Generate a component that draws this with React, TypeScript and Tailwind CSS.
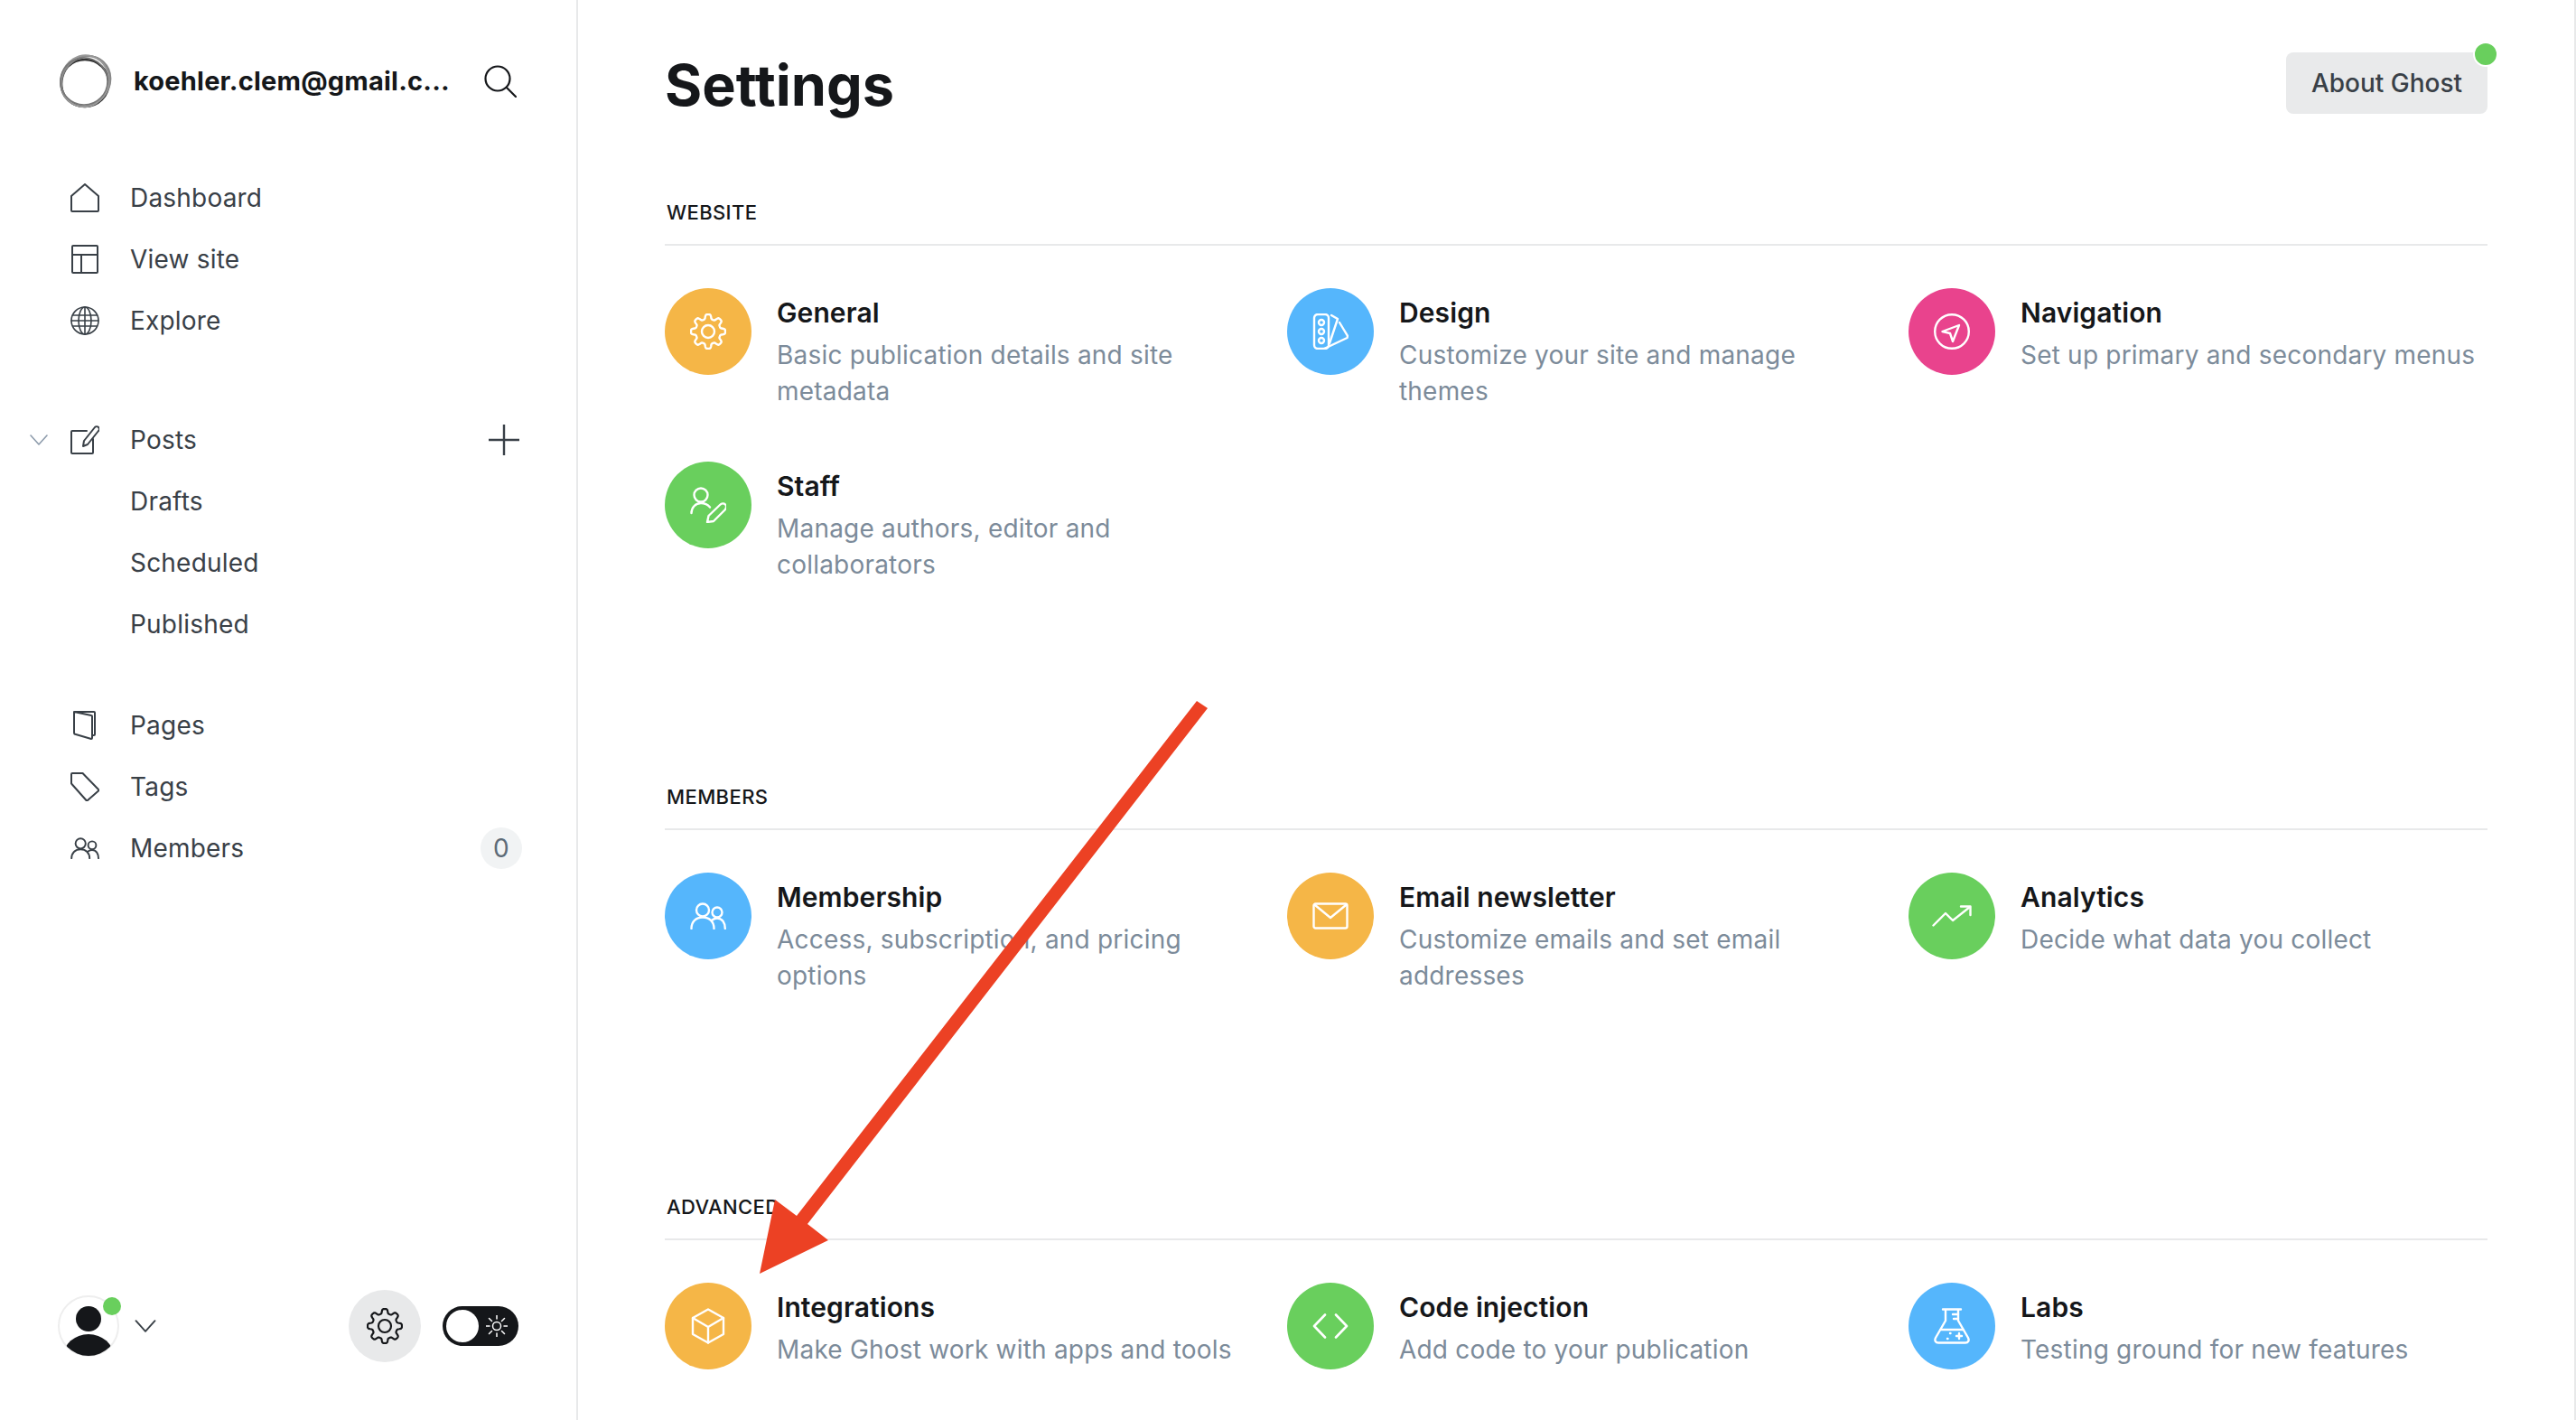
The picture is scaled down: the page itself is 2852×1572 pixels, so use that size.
import React from "react";

const cog = (cx: number, cy: number, r: number, amp: number) => {
  const pts: string[] = [];
  for (let i = 0; i < 160; i++) {
    const a = (i / 160) * Math.PI * 2;
    const wave = Math.tanh(2.2 * Math.cos(8 * a)) / Math.tanh(2.2);
    const rr = r + amp * wave;
    pts.push(`${(cx + rr * Math.cos(a)).toFixed(2)} ${(cy + rr * Math.sin(a)).toFixed(2)}`);
  }
  return "M" + pts.join("L") + "Z";
};

type IconProps = { className?: string };

const line = {
  fill: "none",
  stroke: "currentColor",
  strokeLinecap: "round",
  strokeLinejoin: "round",
} as const;

const HomeIcon = () => (
  <svg viewBox="0 0 32 32" className="w-8 h-8" {...line} strokeWidth={2}>
    <path d="M1 30v-16L16 1l15 13v16a1 1 0 0 1-1 1H2a1 1 0 0 1-1-1z" />
  </svg>
);
const SiteIcon = () => (
  <svg viewBox="0 0 32 32" className="w-8 h-8" {...line} strokeWidth={2}>
    <rect x="2" y="1" width="28" height="30" rx="1" />
    <path d="M2 11h28M12 11v20" />
  </svg>
);
const GlobeIcon = () => (
  <svg viewBox="0 0 32 32" className="w-8 h-8" {...line} strokeWidth={1.6}>
    <circle cx="16" cy="16" r="15" />
    <ellipse cx="16" cy="16" rx="7" ry="15" />
    <path d="M16 1v30M3 10h26M1 16h30M3 22h26" />
  </svg>
);
const PostIcon = () => (
  <svg viewBox="0 0 32 32" className="w-8 h-8" {...line} strokeWidth={2}>
    <path d="M18 6H2a1 1 0 0 0-1 1v23a1 1 0 0 0 1 1h22a1 1 0 0 0 1-1V15" />
    <path d="M14 23l1-6L27 2c1-1 3-1 4 0s1 3 0 4L19 21z" />
  </svg>
);
const PagesIcon = () => (
  <svg viewBox="0 0 32 32" className="w-8 h-8" {...line} strokeWidth={2}>
    <path d="M5 1h21a1 1 0 0 1 1 1v24a1 1 0 0 1-1 1h-2" />
    <path d="M4 1l19 4a1 1 0 0 1 1 1v24a1 1 0 0 1-1 1l-17-5a2 2 0 0 1-2-2z" />
  </svg>
);
const TagIcon = () => (
  <svg viewBox="0 0 32 32" className="w-8 h-8" {...line} strokeWidth={2}>
    <path d="M2 1h11a1 1 0 0 1 1 .5L31 19a1 1 0 0 1 0 1.500L19 31a1 1 0 0 1-1.500 0L1.500 13a1 1 0 0 1-.5-1V2a1 1 0 0 1 1-1z" />
  </svg>
);
const PeopleIcon = ({ className }: IconProps) => (
  <svg viewBox="0 0 40 30" className={className} {...line} strokeWidth={2.4}>
    <circle cx="14" cy="8.500" r="7" />
    <path d="M1.500 29c0-7.500 5-12.500 12.500-12.500S26.500 21.500 26.500 29" />
    <circle cx="30" cy="11" r="5.500" />
    <path d="M24.500 19.500c1.500-1.200 3.500-2 5.500-2 5.500 0 8.800 5 8.800 11.500" />
  </svg>
);
const Chevron = ({ className }: IconProps) => (
  <svg viewBox="0 0 20 12" className={className} {...line} strokeWidth={1.6}>
    <path d="M1 1l9 10 9-10" />
  </svg>
);

// white drawings inside the colored settings circles
const GeneralGlyph = () => (
  <svg viewBox="0 0 40 40" className="w-10 h-10" {...line} strokeWidth={2.400}>
    <path d={cog(20, 20, 16.500, 2.500)} />
    <circle cx="20" cy="20" r="7" />
  </svg>
);
const DesignGlyph = () => (
  <svg viewBox="0 0 40 40" className="w-10 h-10" {...line} strokeWidth={2.400}>
    <rect x="2" y="1" width="16" height="38" rx="4" />
    <circle cx="10" cy="10" r="3" />
    <circle cx="10" cy="20" r="3" />
    <circle cx="10" cy="30" r="3" />
    <path d="M21 2l7 4-9 27" />
    <path d="M30 10l9 15-.5 2L13 39" />
  </svg>
);
const NavigationGlyph = () => (
  <svg viewBox="0 0 40 40" className="w-10 h-10" {...line} strokeWidth={2.400}>
    <circle cx="20" cy="20" r="18.800" />
    <path d="M9.500 20L28 13l-7 18-3-9z" />
  </svg>
);
const StaffGlyph = () => (
  <svg viewBox="0 0 40 40" className="w-10 h-10" {...line} strokeWidth={2.400}>
    <circle cx="12" cy="9" r="7.500" />
    <path d="M1.500 29c0-6 4.500-11 10.500-11 4 0 7.500 1.500 10 4.500" />
    <path d="M19 39l1.500-7L33 20c2-2 4.500-2 6-.5s1.200 4-.5 6L26 38z" />
  </svg>
);
const EmailGlyph = () => (
  <svg viewBox="0 0 40 30" className="w-10 h-[30px]" {...line} strokeWidth={2.400}>
    <rect x="1.500" y="1.500" width="37" height="27" rx="2" />
    <path d="M3 3l17 14L37 3" />
  </svg>
);
const AnalyticsGlyph = () => (
  <svg viewBox="0 0 44 24" className="w-11 h-6" {...line} strokeWidth={2.400}>
    <path d="M1.500 22.500L15 9l8 8L42 2" />
    <path d="M32 1.500h10.500V11" />
  </svg>
);
const CubeGlyph = () => (
  <svg viewBox="0 0 40 40" className="w-10 h-10" {...line} strokeWidth={2.400}>
    <path d="M20 1.500l17 9.500v18l-17 9.500L3 29V11z" />
    <path d="M3 11l17 10 17-10M20 21v17.500" />
  </svg>
);
const CodeGlyph = () => (
  <svg viewBox="0 0 40 28" className="w-10 h-7" {...line} strokeWidth={2.600}>
    <path d="M14 1.500L2 14l12 12.500M26 1.500L38 14 26 26.500" />
  </svg>
);
const LabsGlyph = () => (
  <svg viewBox="0 0 40 40" className="w-10 h-10" {...line} strokeWidth={2.400}>
    <path d="M10 1.500h20M13 1.500V14L2 33c-1.500 3 0 5.500 3 5.500h30c3 0 4.500-2.500 3-5.500L27 14V1.500" />
    <path d="M21 7h6M22 12h5M7.500 24h25" />
    <path d="M28 28v6M25 31h6M15 34h.5M18 28h.5" />
  </svg>
);

const items = {
  website: [
    { title: "General", desc: "Basic publication details and site metadata", bg: "bg-[#f5b647]", icon: <GeneralGlyph /> },
    { title: "Design", desc: "Customize your site and manage themes", bg: "bg-[#55b6fc]", icon: <DesignGlyph /> },
    { title: "Navigation", desc: "Set up primary and secondary menus", bg: "bg-[#e9438d]", icon: <NavigationGlyph /> },
    { title: "Staff", desc: "Manage authors, editor and collaborators", bg: "bg-[#69cf5d]", icon: <StaffGlyph /> },
  ],
  members: [
    { title: "Membership", desc: "Access, subscription, and pricing options", bg: "bg-[#55b6fc]", icon: <PeopleIcon className="w-10 h-[30px]" /> },
    { title: "Email newsletter", desc: "Customize emails and set email addresses", bg: "bg-[#f5b647]", icon: <EmailGlyph /> },
    { title: "Analytics", desc: "Decide what data you collect", bg: "bg-[#69cf5d]", icon: <AnalyticsGlyph /> },
  ],
  advanced: [
    { title: "Integrations", desc: "Make Ghost work with apps and tools", bg: "bg-[#f5b647]", icon: <CubeGlyph /> },
    { title: "Code injection", desc: "Add code to your publication", bg: "bg-[#69cf5d]", icon: <CodeGlyph /> },
    { title: "Labs", desc: "Testing ground for new features", bg: "bg-[#55b6fc]", icon: <LabsGlyph /> },
  ],
};

const SettingItem = ({ item }: { item: (typeof items.website)[number] }) => (
  <div className="flex gap-7 h-24">
    <div className={`w-24 h-24 shrink-0 rounded-full flex items-center justify-center text-white ${item.bg}`}>
      {item.icon}
    </div>
    <div className="pt-[7px]">
      <div className="text-[30px] leading-10 font-semibold text-[#15171a] tracking-[0.1px]">{item.title}</div>
      <div className="text-[28px] leading-10 text-[#7c8b9a] mt-[7px] tracking-[0.2px]">{item.desc}</div>
    </div>
  </div>
);

const Section = ({ label, list, className }: { label: string; list: (typeof items.website); className: string }) => (
  <section className={className}>
    <div className="h-[60px] text-[22px] leading-[50px] font-medium text-[#15171a] pl-[2px] tracking-[0.4px]">{label}</div>
    <div className="border-t-2 border-[#e8e9ea] pt-[47px] grid grid-cols-[642px_641px_1fr] gap-x-[47px] gap-y-24">
      {list.map((item) => (
        <SettingItem key={item.title} item={item} />
      ))}
    </div>
  </section>
);

const NavRow = ({ icon, label, right }: { icon?: React.ReactNode; label: string; right?: React.ReactNode }) => (
  <div className="h-[68px] flex items-center text-[#394047] text-[28px] tracking-[0.2px] pl-[78px] pr-[60px]">
    <span className="w-[66px] shrink-0">{icon}</span>
    <span className="flex-1">{label}</span>
    {right}
  </div>
);

const App = () => {
  return (
    <div className="relative h-[1572px] w-full overflow-hidden flex bg-white font-['Inter',sans-serif] border-r-2 border-[#e8e9ea]">
      <aside className="w-[640px] shrink-0 border-r-2 border-[#e8e9ea] flex flex-col">
        <div className="flex items-center h-[60px] mt-[60px] pl-[65px] pr-[66px]">
          <svg viewBox="0 0 60 60" className="w-[60px] h-[60px] shrink-0" fill="none" stroke="#333" strokeWidth="1.500">
            <ellipse cx="29" cy="32" rx="26.500" ry="26" strokeWidth="2.500" />
            <ellipse cx="30" cy="30" rx="29" ry="25.500" transform="rotate(-62 30 30)" stroke="#555" />
            <ellipse cx="30" cy="30" rx="29" ry="26" transform="rotate(-48 30 30)" stroke="#888" strokeWidth="2" />
            <ellipse cx="30" cy="29" rx="28.500" ry="26.500" transform="rotate(-75 30 30)" stroke="#999" strokeWidth="2" />
            <ellipse cx="28" cy="30" rx="26" ry="26" stroke="#777" />
          </svg>
          <span className="ml-[23px] flex-1 text-[29px] tracking-[0.2px] font-bold text-[#15171a] whitespace-nowrap">koehler.clem@gmail.c...</span>
          <svg viewBox="0 0 36 36" className="w-9 h-9 shrink-0 text-[#15171a]" {...line} strokeWidth={2.200}>
            <circle cx="15" cy="15" r="13.500" />
            <path d="M25 25l10 10" />
          </svg>
        </div>

        <nav className="mt-[65px]">
          <NavRow icon={<HomeIcon />} label="Dashboard" />
          <NavRow icon={<SiteIcon />} label="View site" />
          <NavRow icon={<GlobeIcon />} label="Explore" />
        </nav>

        <nav className="mt-[64px] relative">
          <Chevron className="absolute left-[33px] top-[28px] w-5 h-3 text-[#8e9cac]" />
          <NavRow
            icon={<PostIcon />}
            label="Posts"
            right={
              <svg viewBox="0 0 34 34" className="w-[34px] h-[34px] text-[#394047] mr-[3px]" {...line} strokeWidth={2.400}>
                <path d="M17 0v34M0 17h34" />
              </svg>
            }
          />
          <NavRow label="Drafts" />
          <NavRow label="Scheduled" />
          <NavRow label="Published" />
        </nav>

        <nav className="mt-[44px]">
          <NavRow icon={<PagesIcon />} label="Pages" />
          <NavRow icon={<TagIcon />} label="Tags" />
          <NavRow
            icon={<PeopleIcon className="w-8 h-6" />}
            label="Members"
            right={
              <span className="w-[46px] h-[46px] rounded-full bg-[#f1f3f4] flex items-center justify-center text-[28px] text-[#5d6b78]">
                0
              </span>
            }
          />
        </nav>

        <div className="mt-auto mb-[64px] flex items-center pl-16 pr-16 h-20">
          <div className="relative w-[68px] h-[68px] shrink-0">
            <svg viewBox="0 0 68 68" className="w-[68px] h-[68px]">
              <defs>
                <clipPath id="avatar-clip">
                  <circle cx="34" cy="34" r="33" />
                </clipPath>
              </defs>
              <circle cx="34" cy="34" r="33" fill="#fff" stroke="#eeeeee" strokeWidth="2" />
              <g clipPath="url(#avatar-clip)" fill="#15171a">
                <circle cx="34" cy="26" r="14" />
                <ellipse cx="34" cy="68" rx="28" ry="25" />
              </g>
            </svg>
            <span className="absolute right-[-2px] top-[2px] w-5 h-5 rounded-full bg-[#69cf5d]" />
          </div>
          <Chevron className="ml-[17px] w-6 h-[14px] text-[#394047]" />
          <div className="ml-auto w-20 h-20 rounded-full bg-[#e8e9ea] flex items-center justify-center text-[#15171a]">
            <svg viewBox="0 0 40 40" className="w-10 h-10" {...line} strokeWidth={2.200}>
              <path d={cog(20, 20, 16.500, 2.500)} />
              <circle cx="20" cy="20" r="7" />
            </svg>
          </div>
          <div className="ml-6 w-[84px] h-11 rounded-full bg-[#15171a] flex items-center pl-1">
            <span className="w-9 h-9 rounded-full bg-white" />
            <svg viewBox="0 0 24 24" className="w-6 h-6 ml-2 text-white" {...line} strokeWidth={1.500}>
              <circle cx="12" cy="12" r="4.500" />
              <path d="M12 0v4M12 20v4M0 12h4M20 12h4M3.500 3.500l3 3M17.500 17.500l3 3M3.500 20.500l3-3M17.500 6.500l3-3" />
            </svg>
          </div>
        </div>
      </aside>

      <main className="flex-1 pl-[96px] pr-[96px]">
        <header className="flex items-start justify-between h-[210px]">
          <h1 className="text-[63px] leading-[72px] font-bold text-[#15171a] mt-[58px]">Settings</h1>
          <div className="relative mt-[58px]">
            <button className="w-[223px] h-[68px] rounded-lg bg-[#e9eaeb] text-[28px] font-medium text-[#394047]">
              About Ghost
            </button>
            <span className="absolute right-[-12px] top-[-12px] w-[28px] h-[28px] rounded-full bg-[#69cf5d] border-2 border-white" />
          </div>
        </header>
        <Section label="WEBSITE" list={items.website} className="" />
        <Section label="MEMBERS" list={items.members} className="mt-[250px]" />
        <Section label="ADVANCED" list={items.advanced} className="mt-[249px]" />
      </main>

      <svg viewBox="0 0 2852 1572" className="absolute left-0 top-0 w-[2852px] h-[1572px] pointer-events-none">
        <path d="M1325 776L882 1346 858 1328 841 1410 917 1373 894 1355 1337 784Z" fill="#ec4124" />
      </svg>
    </div>
  );
};

export default App;
